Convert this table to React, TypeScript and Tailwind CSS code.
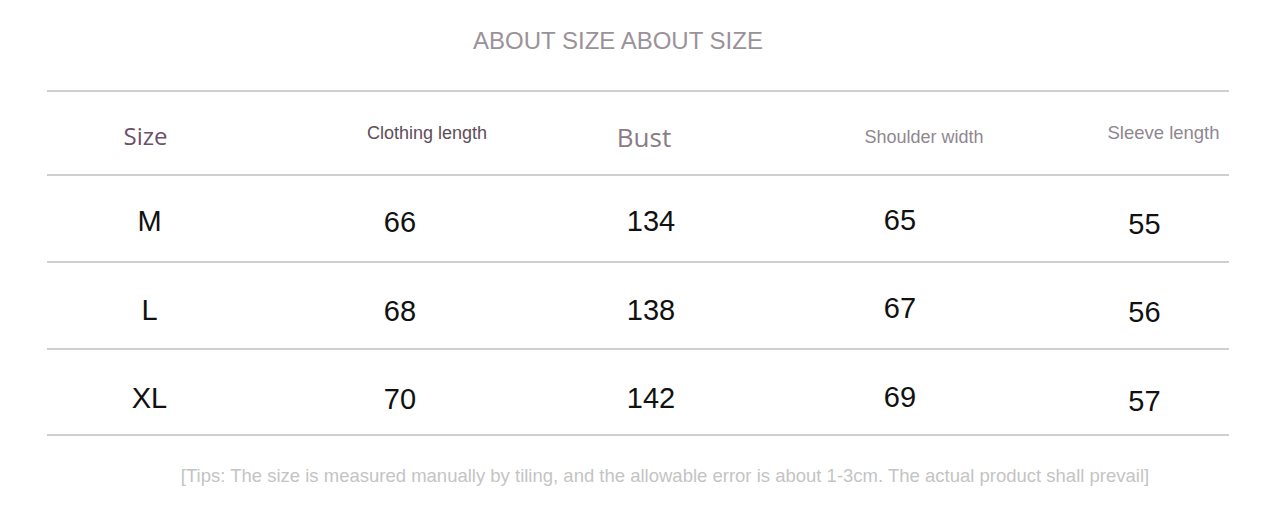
const header = [
  { label: "Size", cls: "text-[24px] text-[#6e4f68] pr-[8px] pt-[6px]", font: "'Open Sans', sans-serif" },
  { label: "Clothing length", cls: "text-[18px] text-[#5e4d59] pl-[54px]", font: "'Liberation Sans Narrow', 'Liberation Sans', sans-serif" },
  { label: "Bust", cls: "text-[26px] text-[#8a7b86] pr-[14px] pt-[8px]", font: "'Open Sans', sans-serif" },
  { label: "Shoulder width", cls: "text-[18px] text-[#8f8790] pl-[48px] pt-[8px]", font: "'Liberation Sans', sans-serif" },
  { label: "Sleeve length", cls: "text-[18.5px] text-[#8f8790] pl-[52px]", font: "'Liberation Sans', sans-serif" },
]

const rows = [
  { h: "h-[87px]", pad: "pt-[7px]", cells: ["M", "66", "134", "65", "55"] },
  { h: "h-[87px]", pad: "pt-[10px]", cells: ["L", "68", "138", "67", "56"] },
  { h: "h-[86px]", pad: "pt-[14px]", cells: ["XL", "70", "142", "69", "57"] },
]

// small per-column vertical nudges, the image is a bit wobbly
const colPad = ["", "pt-[2px]", "", "pt-0 pb-[3px]", "pt-[5px] pl-[14px]"]

export default function App() {
  return (
    <div className="w-[1280px] h-[521px] bg-white overflow-hidden" style={{ fontFamily: "'Liberation Sans', Arial, sans-serif" }}>
      <div className="h-[90px] flex items-center justify-center pb-[8px] pr-[44px]">
        <h1 className="text-[24px] text-[#9b9299]" style={{ fontFamily: "'Liberation Sans', sans-serif" }}>
          ABOUT SIZE ABOUT SIZE
        </h1>
      </div>

      <div className="ml-[47px] w-[1182px]">
        <div className="grid grid-cols-[205px_296px_206px_292px_183px] h-[86px] border-t-2 border-b-2 border-[#cfcfcf] items-center">
          {header.map((h) => (
            <div key={h.label} className={`text-center whitespace-nowrap ${h.cls}`} style={{ fontFamily: h.font }}>
              {h.label}
            </div>
          ))}
        </div>

        {rows.map((r, i) => (
          <div key={i} className={`grid grid-cols-[205px_296px_206px_292px_183px] ${r.h} border-b-2 border-[#cfcfcf] items-center text-[29px] text-[#111] ${r.pad}`}>
            {r.cells.map((c, j) => (
              <div key={j} className={`text-center ${colPad[j]}`}>
                {c}
              </div>
            ))}
          </div>
        ))}
      </div>

      <p className="mt-[26px] text-center text-[18.5px] text-[#c4c4c4] pl-[50px] whitespace-nowrap">
        [Tips: The size is measured manually by tiling, and the allowable error is about 1-3cm. The actual product shall prevail]
      </p>
    </div>
  )
}
